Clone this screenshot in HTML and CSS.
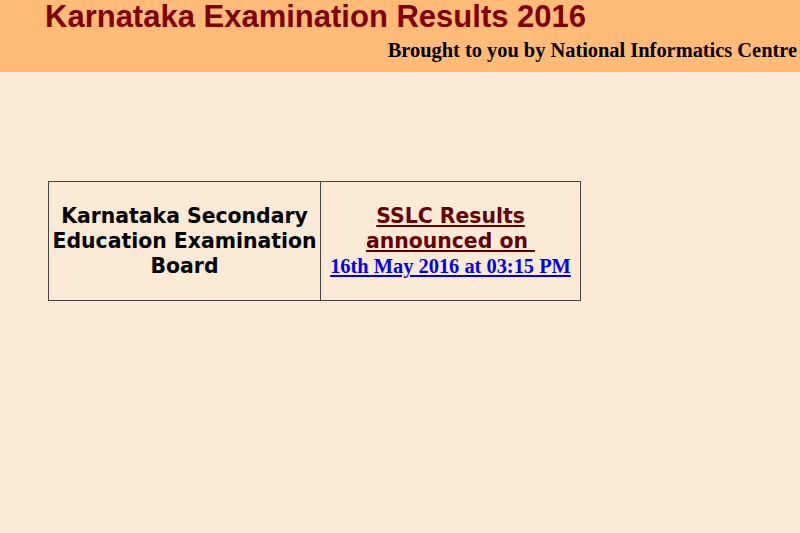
FILE: index.html
```html
<!DOCTYPE html>
<html>
<head>
<meta charset="utf-8">
<link rel="stylesheet" href="styles.css">
</head>
<body>
<div class="header">
  <h1 class="title">Karnataka Examination Results 2016</h1>
  <div class="credit">Brought to you by National Informatics Centre</div>
</div>
<div class="main">
  <table class="results">
    <tr>
      <td class="board">Karnataka Secondary Education Examination Board</td>
      <td class="info">
        <a class="sslc" href="#">SSLC Results<br>announced on&nbsp;</a><br>
        <a class="date" href="#">16th May 2016 at 03:15 PM</a>
      </td>
    </tr>
  </table>
</div>
</body>
</html>
```
FILE: styles.css
```css
html, body {
  margin: 0;
  padding: 0;
  background: #faead6;
  height: 100%;
}
.header {
  background: #ffbb77;
  height: 72px;
  box-sizing: border-box;
  padding: 0 3px 0 45px;
}
.title {
  margin: 0;
  font-family: "Liberation Sans", Arial, sans-serif;
  font-weight: bold;
  font-size: 31px;
  line-height: 34px;
  color: #800000;
}
.credit {
  text-align: right;
  font-family: "Liberation Serif", "Times New Roman", serif;
  font-weight: bold;
  font-size: 20.4px;
  line-height: 24px;
  margin-top: 4px;
  color: #000;
}
.main {
  padding: 109px 0 0 48px;
}
.results {
  border-collapse: collapse;
  border: 1px solid #444;
}
.results td {
  border: 1px solid #444;
  text-align: center;
  vertical-align: middle;
  height: 119px;
  box-sizing: border-box;
  padding: 0 2px;
}
.board {
  width: 272px;
  font-family: "DejaVu Sans", Verdana, sans-serif;
  font-weight: bold;
  font-size: 20.4px;
  line-height: 25px;
  color: #000;
}
.info {
  width: 260px;
}
.sslc {
  font-family: "DejaVu Sans", Verdana, sans-serif;
  font-weight: bold;
  font-size: 20.4px;
  line-height: 25px;
  color: #660000;
}
.date {
  font-family: "Liberation Serif", "Times New Roman", serif;
  font-weight: bold;
  font-size: 20.4px;
  line-height: 25px;
  color: #0000ee;
}
```
